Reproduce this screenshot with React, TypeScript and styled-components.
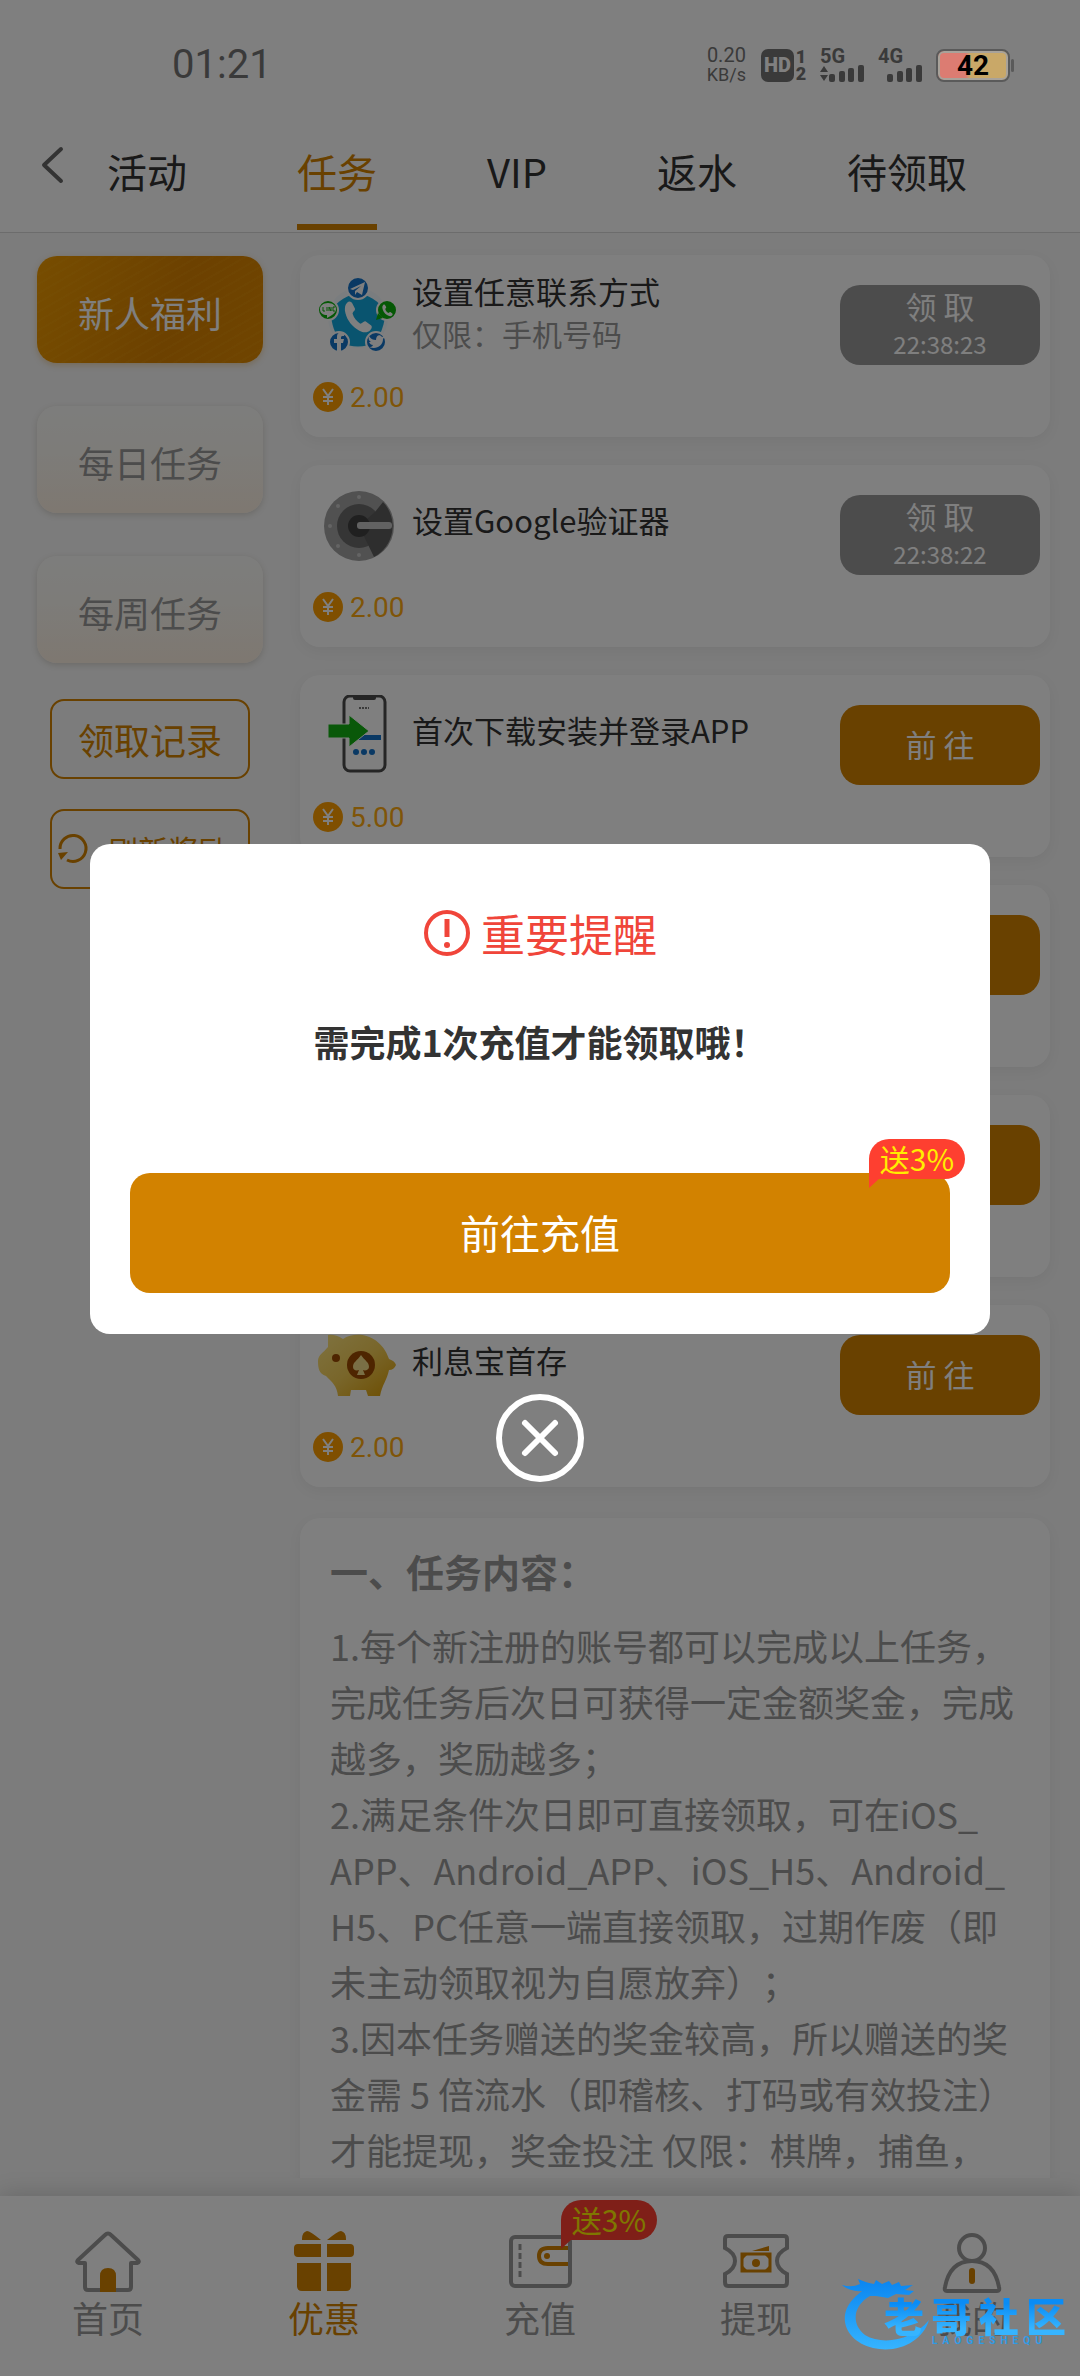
import React from 'react';
import styled, { createGlobalStyle, css } from 'styled-components';

const brand = '#d28200';

const GlobalStyle = createGlobalStyle`
  *, *::before, *::after { box-sizing: border-box; }
  body {
    margin: 0;
    background: #f8f8f8;
    font-family: "Noto Sans CJK SC", "Noto Sans", sans-serif;
    color: #333;
  }
  button { font-family: inherit; border: 0; padding: 0; background: none; cursor: pointer; }
  a { color: inherit; text-decoration: none; }
  h2, p { margin: 0; font-weight: 400; }
  svg { display: block; flex: none; }
`;

const Screen = styled.div`
  position: relative;
  display: flex;
  flex-direction: column;
  height: 100vh;
  overflow: hidden;
`;

/* ---------- status bar ---------- */

const StatusBackdrop = styled.div`
  background: #fff;
  flex: none;
`;

const StatusBar = styled.div`
  position: relative;
  z-index: 3;
  display: flex;
  justify-content: space-between;
  align-items: center;
  height: 130px;
  padding: 0 70px 0 172px;
  color: #3a3a3a;
  font-family: Roboto, sans-serif;
`;

const Clock = styled.time`
  font-size: 40px;
  line-height: 44px;
`;

const StatusIcons = styled.div`
  display: flex;
  align-items: center;
`;

const Speed = styled.div`
  display: grid;
  justify-items: center;
  margin-right: 15px;
  font-size: 20px;
  line-height: 20px;
  small { font-size: 18px; }
`;

const HdBadge = styled.span`
  width: 33px;
  height: 33px;
  border-radius: 7px;
  background: #3a3a3a;
  color: #808080;
  font-size: 20px;
  font-weight: 900;
  line-height: 33px;
  text-align: center;
`;

const SimNumbers = styled.span`
  display: grid;
  width: 14px;
  margin-right: 12px;
  justify-items: center;
  font-size: 18px;
  font-weight: 900;
  line-height: 17px;
`;

const Signal = styled.span`
  display: grid;
  width: 46px;
  margin-right: 12px;
  font-size: 20px;
  font-weight: 700;
  line-height: 16px;
`;

const Battery = styled.span`
  position: relative;
  width: 74px;
  height: 33px;
  border: 2px solid #5a5a5a;
  border-radius: 8px;
  background: linear-gradient(90deg, #dc7c72 0 40%, #c9a868 46% 100%);
  box-shadow: inset 0 0 0 2px #a8a29a;
  color: #000;
  font-size: 28px;
  font-weight: 700;
  line-height: 30px;
  text-align: center;
  &::after {
    content: "";
    position: absolute;
    top: 8px;
    right: -6px;
    width: 3px;
    height: 13px;
    border-radius: 2px;
    background: #5a5a5a;
  }
`;

/* ---------- header ---------- */

const Header = styled.header`
  display: flex;
  flex: none;
  height: 103px;
  padding-left: 38px;
  border-bottom: 1px solid #d8d8d8;
  background: #fff;
`;

const BackButton = styled.button`
  display: flex;
  width: 69px;
  padding-top: 16px;
`;

const Tabs = styled.nav`
  display: flex;
  gap: 110px;
`;

const Tab = styled.a<{ $active?: boolean }>`
  height: 100px;
  border-bottom: 6px solid ${p => (p.$active ? brand : 'transparent')};
  color: ${p => (p.$active ? brand : '#333')};
  font-size: 40px;
  line-height: 82px;
  white-space: nowrap;
`;

/* ---------- body ---------- */

const Body = styled.main`
  display: flex;
  flex: 1;
  min-height: 0;
  gap: 37px;
  margin-bottom: 18px;
  padding: 22px 30px 0 37px;
  overflow: hidden;
`;

const Side = styled.aside`
  display: flex;
  flex: none;
  flex-direction: column;
  align-items: center;
  width: 226px;
  padding-top: 1px;
`;

const CategoryButton = styled.button<{ $active?: boolean }>`
  width: 100%;
  height: 107px;
  margin-bottom: 43px;
  padding-top: 4px;
  border-radius: 20px;
  font-size: 36px;
  ${p =>
    p.$active
      ? css`
          background:
            repeating-linear-gradient(150deg, rgba(255, 200, 60, 0.07) 0 2px, transparent 2px 8px),
            linear-gradient(110deg, #ee9a00, #d98200 60%, #e08a00);
          color: #fff;
          box-shadow: 0 2px 6px rgba(210, 130, 0, 0.3);
        `
      : css`
          background: linear-gradient(180deg, #fbfbf9 0%, #fbf8f2 45%, #fcf0e2 100%);
          color: #999;
          box-shadow: 0 2px 6px rgba(80, 60, 30, 0.18);
        `}
`;

const OutlineButton = styled.button<{ $small?: boolean }>`
  display: flex;
  align-items: center;
  justify-content: ${p => (p.$small ? 'space-between' : 'center')};
  width: 200px;
  height: 80px;
  margin-bottom: 30px;
  padding: ${p => (p.$small ? '0 20px 0 5px' : '0')};
  border: 2px solid ${brand};
  border-radius: 14px;
  color: ${brand};
  font-size: ${p => (p.$small ? 30 : 36)}px;
`;

const SideActions = styled.div`
  margin-top: -7px;
`;

const Column = styled.section`
  flex: 1;
  min-width: 0;
`;

const Card = styled.article`
  height: 182px;
  margin-bottom: 28px;
  border-radius: 20px;
  background: #fff;
  box-shadow: 0 4px 14px rgba(0, 0, 0, 0.05);
`;

const CardTop = styled.div`
  display: flex;
  height: 110px;
  padding: 20px 10px 0 18px;
`;

const CardIcon = styled.div`
  width: 80px;
  height: 80px;
`;

const CardText = styled.div`
  display: flex;
  flex: 1;
  flex-direction: column;
  justify-content: center;
  height: 70px;
  padding-left: 14px;
`;

const CardTitle = styled.h2`
  font-size: 31px;
  line-height: 46px;
`;

const CardNote = styled.p`
  color: #999;
  font-size: 30px;
  line-height: 38px;
`;

const ActionButton = styled.button<{ $waiting?: boolean }>`
  display: flex;
  flex-direction: column;
  align-items: center;
  justify-content: center;
  width: 200px;
  height: 80px;
  margin-top: 10px;
  padding-bottom: ${p => (p.$waiting ? 0 : 2)}px;
  border-radius: 20px;
  background: ${p => (p.$waiting ? '#999' : brand)};
  color: #fff;
  font-size: 31px;
  line-height: 38px;
  white-space: pre;
  small { font-size: 24px; }
`;

const Reward = styled.div`
  display: flex;
  align-items: center;
  gap: 7px;
  height: 32px;
  margin-top: 16px;
  padding-left: 13px;
  color: #ffaa10;
  font-family: Roboto, sans-serif;
  font-size: 28px;
`;

const Rules = styled.section`
  margin-top: 31px;
  padding: 25px 30px;
  border-radius: 20px;
  background: #fff;
  box-shadow: 0 4px 14px rgba(0, 0, 0, 0.05);
  color: #999;
  font-size: 36px;
  line-height: 56px;
  text-spacing-trim: space-all;
`;

const RulesTitle = styled.h2`
  margin-bottom: 18px;
  font-size: 38px;
  font-weight: 700;
`;

/* ---------- bottom navigation ---------- */

const BottomNav = styled.nav`
  display: grid;
  flex: none;
  grid-template-columns: repeat(5, 1fr);
  height: 180px;
  background: #fff;
  box-shadow: 0 -2px 22px rgba(0, 0, 0, 0.16);
`;

const NavItem = styled.a<{ $active?: boolean }>`
  position: relative;
  display: flex;
  flex-direction: column;
  align-items: center;
  padding-top: 29px;
  color: ${p => (p.$active ? brand : '#999')};
  font-size: 36px;
  line-height: 40px;
`;

const Badge = styled.span`
  position: absolute;
  z-index: 1;
  width: 96px;
  height: 40px;
  border-radius: 20px 20px 20px 0;
  background: #fe3f30;
  color: #ffee00;
  font-size: 30px;
  line-height: 38px;
  text-align: center;
  &::after {
    content: "";
    position: absolute;
    top: 39px;
    left: 0;
    border-top: 10px solid #fe3f30;
    border-right: 11px solid transparent;
  }
`;

const NavBadge = styled(Badge)`
  top: 4px;
  left: calc(50% + 21px);
`;

const PayBadge = styled(Badge)`
  top: -34px;
  right: -15px;
`;

/* ---------- dialog ---------- */

const Mask = styled.div`
  position: absolute;
  inset: 0;
  z-index: 2;
  display: flex;
  flex-direction: column;
  align-items: center;
  justify-content: center;
  gap: 60px;
  padding: 0 90px 50px;
  background: rgba(0, 0, 0, 0.5);
`;

const Dialog = styled.div`
  width: 100%;
  padding: 59px 40px 41px;
  border-radius: 20px;
  background: #fff;
`;

const DialogTitle = styled.h2`
  display: flex;
  align-items: center;
  justify-content: center;
  gap: 10px;
  color: #f0453a;
  font-size: 44px;
  line-height: 60px;
`;

const DialogMessage = styled.p`
  margin: 50px 0 103px;
  font-size: 36px;
  font-weight: 700;
  line-height: 57px;
  text-align: center;
`;

const PayButton = styled.button`
  position: relative;
  display: block;
  width: 100%;
  height: 120px;
  padding-bottom: 3px;
  border-radius: 20px;
  background: ${brand};
  color: #fff;
  font-size: 40px;
`;

const CloseButton = styled.button`
  width: 88px;
  height: 88px;
`;

/* ---------- community mark ---------- */

const Mark = styled.div`
  position: absolute;
  z-index: 3;
  right: 14px;
  bottom: 24px;
  width: 224px;
  height: 74px;
`;

const MarkText = styled.div`
  position: absolute;
  top: 14px;
  right: 0;
  display: flex;
  justify-content: space-between;
  width: 182px;
  background: linear-gradient(180deg, #0a8cf5 25%, #36b4ff 80%);
  background-clip: text;
  color: transparent;
  font-size: 40px;
  font-weight: 900;
  line-height: 46px;
`;

const MarkLatin = styled.div`
  position: absolute;
  right: 24px;
  bottom: 5px;
  display: flex;
  justify-content: space-between;
  width: 110px;
  color: #2f9be6;
  font-family: Roboto, sans-serif;
  font-size: 10px;
  font-weight: 700;
  line-height: 12px;
`;

/* ---------- drawings ---------- */

const BackIcon = () => (
  <svg width="28" height="38" viewBox="0 0 28 38" fill="none" stroke="#666" strokeWidth="4" strokeLinecap="round" strokeLinejoin="round">
    <path d="M23 3 6 19l17 16" />
  </svg>
);

const Bars = ({ arrows }: { arrows?: boolean }) => (
  <svg width="46" height="18" viewBox="0 0 46 18" fill="#3a3a3a">
    {arrows && <path d="M0 8 4 2l4 6zM0 11h8l-4 6z" />}
    <rect x="9" y="10" width="6" height="8" rx="2" />
    <rect x="19" y="7" width="6" height="11" rx="2" />
    <rect x="28" y="4" width="6" height="14" rx="2" />
    <rect x="38" y="1" width="6" height="17" rx="2" />
  </svg>
);

const handset = 'M-9-12c2-2 4-1 5 1l2 4c1 2-2 3-2 5 1 4 4 7 7 9 2 0 3-3 5-2l4 3c2 1 2 3 0 5-3 3-8 2-12-1C-6 8-10 2-11-5c0-3 0-5 2-7z';

const ContactIcon = () => (
  <svg width="80" height="80" viewBox="0 0 80 80">
    <circle cx="40" cy="43" r="30" fill="#f4fbff" />
    <path d="M40 17c16 6 24 12 27 20 0 12-4 22-10 30-10 6-24 6-34 0-6-8-10-18-10-30 3-8 11-14 27-20z" fill="#12a8de" />
    <path d={handset} transform="translate(39 41) scale(1.1)" fill="#fff" />
    <circle cx="40" cy="13" r="11" fill="#1473c8" stroke="#fff" strokeWidth="2" />
    <path d="m32 14 15-7-3 13-5-3-2 3v-4l6-5-8 4z" fill="#fff" />
    <circle cx="10" cy="35" r="10" fill="#0bb00b" stroke="#fff" strokeWidth="2" />
    <path d="M10 28c5 0 8 3 8 6 0 4-4 6-9 9v-3c-4 0-7-2-7-6 0-3 3-6 8-6z" fill="#fff" />
    <path d="M5 32v4h2M9 32v4M11 36v-4l2 4v-4M17 32h-2v4h2" fill="none" stroke="#0bb00b" strokeWidth="1" />
    <circle cx="69" cy="35" r="10" fill="#0bb00b" stroke="#fff" strokeWidth="2" />
    <path d="m58 45 2-7 5 5z" fill="#0bb00b" />
    <path d={handset} transform="translate(69 35) scale(.42)" fill="#fff" />
    <circle cx="21" cy="67" r="10" fill="#1473c8" stroke="#fff" strokeWidth="2" />
    <path d="M19 77v-9h-3v-4h3v-2c0-4 2-5 7-5v4c-3 0-3 0-3 3h3l-1 4h-2v9z" fill="#fff" />
    <circle cx="58" cy="67" r="10" fill="#1473c8" stroke="#fff" strokeWidth="2" />
    <path d="M51 61c2 3 4 4 7 4 0-5 4-6 6-3l3-1-2 3c0 7-7 11-14 8 2 0 3 0 4-2-2 0-3-1-4-3h2c-2-1-3-3-2-6z" fill="#fff" />
  </svg>
);

const AuthenticatorIcon = () => (
  <svg width="80" height="80" viewBox="0 0 80 80">
    <circle cx="41" cy="41" r="35" fill="#a2a2a2" />
    <circle cx="41" cy="41" r="22" fill="#6a6a6a" />
    <path d="M41 41 57 27l8-10a35 35 0 0 1-9 55z" fill="#5c5c5c" />
    <circle cx="41" cy="41" r="11" fill="#404040" />
    <rect x="39" y="37" width="35" height="7" rx="3" fill="#c4c4c4" />
    <g fill="#c8c8c8">
      <circle cx="41" cy="12" r="2" /><circle cx="20" cy="21" r="2" /><circle cx="12" cy="41" r="2" />
      <circle cx="20" cy="61" r="2" /><circle cx="41" cy="70" r="2" />
    </g>
  </svg>
);

const PhoneIcon = () => (
  <svg width="80" height="80" viewBox="0 0 80 80">
    <rect x="26" y="1" width="41" height="75" rx="6" fill="#fff" stroke="#4a4a4a" strokeWidth="3" />
    <path d="M35 1h23v2q0 2-2 2H37q-2 0-2-2z" fill="#4a4a4a" />
    <path d="M41 13h10" stroke="#777" strokeWidth="2" strokeDasharray="2 1" />
    <rect x="40" y="40" width="23" height="5" fill="#1473c8" />
    <circle cx="38" cy="57" r="3" fill="#1473c8" /><circle cx="46" cy="57" r="3" fill="#1473c8" /><circle cx="54" cy="57" r="3" fill="#1473c8" />
    <path d="M10 29h21v-9l20 16-20 16v-9H10z" fill="#12b012" stroke="#fff" strokeWidth="1" />
  </svg>
);

const PiggyIcon = () => (
  <svg width="80" height="80" viewBox="0 0 80 80">
    <defs>
      <linearGradient id="pig" x1="0" y1="0" x2="1" y2="1">
        <stop offset="0" stopColor="#ffe680" /><stop offset=".5" stopColor="#f2cc55" /><stop offset="1" stopColor="#d99a00" />
      </linearGradient>
    </defs>
    <path d="M10 10q7-1 15 4c14-9 38-4 46 20q6 2 7 6-2 5-7 5c-2 10-7 15-9 26H50l-2-6H33l-1 6H20c-1-10-6-14-12-20-7-2-8-8-8-15 0-6 5-8 10-14z" fill="url(#pig)" />
    <circle cx="18" cy="33" r="4" fill="#9c4a00" />
    <circle cx="43" cy="40" r="14" fill="#9c4a00" />
    <path d="M43 30c4 6 8 7 8 12 0 3-4 4-6 3l2 5h-8l2-5c-3 1-6 0-6-3 0-5 4-6 8-12z" fill="#f5df8a" />
  </svg>
);

const CoinIcon = () => (
  <svg width="30" height="30" viewBox="0 0 30 30">
    <circle cx="15" cy="15" r="15" fill="#ff9f00" />
    <path d="m10 7 5 7 5-7M10 15h10M10 19h10M15 14v9" fill="none" stroke="#fff" strokeWidth="2" />
  </svg>
);

const RefreshIcon = () => (
  <svg width="32" height="32" viewBox="0 0 32 32" fill="none" stroke={brand} strokeWidth="3">
    <path d="M3 16a13 13 0 1 1 7 11" />
    <path d="m1 20 10-1-7 8z" fill={brand} stroke="none" />
  </svg>
);

const HomeIcon = () => (
  <svg width="68" height="72" viewBox="0 0 68 72" fill="none" stroke="#999" strokeWidth="4" strokeLinejoin="round" strokeLinecap="round">
    <path d="M11 38v24q0 3 3 3h40q3 0 3-3V38h6q3-1 1-3L37 10q-3-3-6 0L4 35q-2 2 1 3z" />
    <path d="M26 67V51q0-8 8-8t8 8v16z" fill={brand} stroke="none" />
  </svg>
);

const GiftIcon = () => (
  <svg width="68" height="72" viewBox="0 0 68 72" fill={brand}>
    <path d="M12 14q0-7 5-8 3 0 14 9H12zM56 14q0-7-5-8-3 0-14 9h19z" />
    <path d="M8 19h23v13H8q-4 0-4-4v-5q0-4 4-4zM37 19h23q4 0 4 4v5q0 4-4 4H37zM7 38h24v28H12q-5 0-5-5zM37 38h24v23q0 5-5 5H37z" />
  </svg>
);

const WalletIcon = () => (
  <svg width="68" height="72" viewBox="0 0 68 72" fill="none">
    <rect x="5" y="12" width="59" height="49" rx="4" stroke="#999" strokeWidth="4" />
    <path d="M14 19v35" stroke="#999" strokeWidth="3" strokeDasharray="6 3" />
    <path d="M62 23H42q-9 0-9 8t9 8h20" stroke={brand} strokeWidth="4" />
    <circle cx="41" cy="31" r="3" fill={brand} />
  </svg>
);

const TicketIcon = () => (
  <svg width="68" height="72" viewBox="0 0 68 72" fill="none">
    <path d="M6 11h56q3 0 3 3v9q-10 5-10 13t10 13v8q0 4-3 4H6q-3 0-3-4v-8q10-5 10-13T3 23v-9q0-3 3-3z" stroke="#999" strokeWidth="4" />
    <rect x="20" y="29" width="28" height="17" stroke={brand} strokeWidth="3" />
    <circle cx="34" cy="38" r="4" fill={brand} />
    <path d="m30 26 17-5v5zM21 34l5-5h-5zM47 34l-5-5h5zM21 41l5 5h-5zM47 41l-5 5h5z" fill={brand} />
  </svg>
);

const UserIcon = () => (
  <svg width="68" height="72" viewBox="0 0 68 72" fill="none" stroke="#999" strokeWidth="4">
    <circle cx="34" cy="23" r="13" />
    <path d="M9 66q-3 0-2-4 5-26 27-26t27 26q1 4-2 4z" />
    <path d="M34 46v10" stroke={brand} strokeWidth="6" strokeLinecap="round" />
  </svg>
);

const AlertIcon = () => (
  <svg width="48" height="48" viewBox="0 0 48 48" fill="none" stroke="#f0453a">
    <circle cx="24" cy="24" r="21" strokeWidth="4" />
    <path d="M24 10v18" strokeWidth="5" />
    <circle cx="24" cy="36" r="3" fill="#f0453a" stroke="none" />
  </svg>
);

const CloseIcon = () => (
  <svg width="88" height="88" viewBox="0 0 88 88" fill="none" stroke="#fff" strokeWidth="6" strokeLinecap="round">
    <circle cx="44" cy="44" r="41" />
    <path d="m29 29 30 30M59 29 29 59" />
  </svg>
);

const DragonIcon = () => (
  <svg width="100" height="74" viewBox="0 0 100 74">
    <defs>
      <linearGradient id="dragon" x1="0" y1="0" x2="0" y2="1">
        <stop offset="0" stopColor="#0a85f0" /><stop offset="1" stopColor="#36b4ff" />
      </linearGradient>
    </defs>
    <path
      d="M0 7q10 3 18-1l-2-5q9 4 16 5l2-4 6 4 7-3 3 4 7-3 2 4 12-1-8 5 9 1-5 4-13-1-8 4-12-2-6 0C12 27 8 45 23 57c18 11 48 5 64-15-6 21-31 34-56 28C3 63-7 37 14 18l6-5q-12 1-20-6z"
      fill="url(#dragon)"
    />
  </svg>
);

/* ---------- data ---------- */

type Task = { icon?: React.ReactNode; title?: string; note?: string; reward?: string; wait?: string };

const tasks: Task[] = [
  { icon: <ContactIcon />, title: '设置任意联系方式', note: '仅限：手机号码', reward: '2.00', wait: '22:38:23' },
  { icon: <AuthenticatorIcon />, title: '设置Google验证器', reward: '2.00', wait: '22:38:22' },
  { icon: <PhoneIcon />, title: '首次下载安装并登录APP', reward: '5.00' },
  {},
  {},
  { icon: <PiggyIcon />, title: '利息宝首存', reward: '2.00' },
];

const tabs = ['活动', '任务', 'VIP', '返水', '待领取'];

const navItems = [
  { label: '首页', icon: <HomeIcon /> },
  { label: '优惠', icon: <GiftIcon />, active: true },
  { label: '充值', icon: <WalletIcon />, badge: '送3%' },
  { label: '提现', icon: <TicketIcon /> },
  { label: '我的', icon: <UserIcon /> },
];

const TaskCard = ({ icon, title, note, reward, wait }: Task) => (
  <Card>
    <CardTop>
      <CardIcon>{icon}</CardIcon>
      <CardText>
        {title && <CardTitle>{title}</CardTitle>}
        {note && <CardNote>{note}</CardNote>}
      </CardText>
      <ActionButton type="button" $waiting={!!wait}>
        {wait ? '领 取' : '前 往'}
        {wait && <small>{wait}</small>}
      </ActionButton>
    </CardTop>
    {reward && (
      <Reward>
        <CoinIcon />
        {reward}
      </Reward>
    )}
  </Card>
);

export default function App() {
  return (
    <Screen>
      <GlobalStyle />
      <StatusBackdrop>
        <StatusBar>
          <Clock>01:21</Clock>
          <StatusIcons>
            <Speed>
              0.20<small>KB/s</small>
            </Speed>
            <HdBadge>HD</HdBadge>
            <SimNumbers>
              <span>1</span>
              <span>2</span>
            </SimNumbers>
            <Signal>
              5G
              <Bars arrows />
            </Signal>
            <Signal>
              4G
              <Bars />
            </Signal>
            <Battery>42</Battery>
          </StatusIcons>
        </StatusBar>
      </StatusBackdrop>

      <Header>
        <BackButton type="button" aria-label="返回">
          <BackIcon />
        </BackButton>
        <Tabs>
          {tabs.map(t => (
            <Tab key={t} href="#" $active={t === '任务'}>
              {t}
            </Tab>
          ))}
        </Tabs>
      </Header>

      <Body>
        <Side>
          <CategoryButton type="button" $active>
            新人福利
          </CategoryButton>
          <CategoryButton type="button">每日任务</CategoryButton>
          <CategoryButton type="button">每周任务</CategoryButton>
          <SideActions>
            <OutlineButton type="button">领取记录</OutlineButton>
            <OutlineButton type="button" $small>
              <RefreshIcon />
              刷新奖励
            </OutlineButton>
          </SideActions>
        </Side>
        <Column>
          {tasks.map((task, i) => (
            <TaskCard key={i} {...task} />
          ))}
          <Rules>
            <RulesTitle>一、任务内容：</RulesTitle>
            <p>1.每个新注册的账号都可以完成以上任务，完成任务后次日可获得一定金额奖金，完成越多，奖励越多；</p>
            <p>
              2.满足条件次日即可直接领取，可在iOS_
              <wbr />
              APP、Android_
              <wbr />
              APP、iOS_
              <wbr />
              H5、Android_
              <wbr />
              H5、PC任意一端直接领取，过期作废（即未主动领取视为自愿放弃）；
            </p>
            <p>3.因本任务赠送的奖金较高，所以赠送的奖金需 5 倍流水（即稽核、打码或有效投注）才能提现，奖金投注 仅限：棋牌，捕鱼，</p>
          </Rules>
        </Column>
      </Body>

      <BottomNav>
        {navItems.map(item => (
          <NavItem key={item.label} href="#" $active={item.active}>
            {item.icon}
            {item.label}
            {item.badge && <NavBadge>{item.badge}</NavBadge>}
          </NavItem>
        ))}
      </BottomNav>

      <Mask>
        <Dialog role="dialog" aria-modal="true" aria-labelledby="notice-title">
          <DialogTitle id="notice-title">
            <AlertIcon />
            重要提醒
          </DialogTitle>
          <DialogMessage>需完成1次充值才能领取哦！</DialogMessage>
          <PayButton type="button">
            前往充值
            <PayBadge>送3%</PayBadge>
          </PayButton>
        </Dialog>
        <CloseButton type="button" aria-label="关闭">
          <CloseIcon />
        </CloseButton>
      </Mask>

      <Mark>
        <DragonIcon />
        <MarkText>
          {[...'老哥社区'].map(c => (
            <span key={c}>{c}</span>
          ))}
        </MarkText>
        <MarkLatin>
          {[...'LAOGESHEQU'].map((c, i) => (
            <span key={i}>{c}</span>
          ))}
        </MarkLatin>
      </Mark>
    </Screen>
  );
}
